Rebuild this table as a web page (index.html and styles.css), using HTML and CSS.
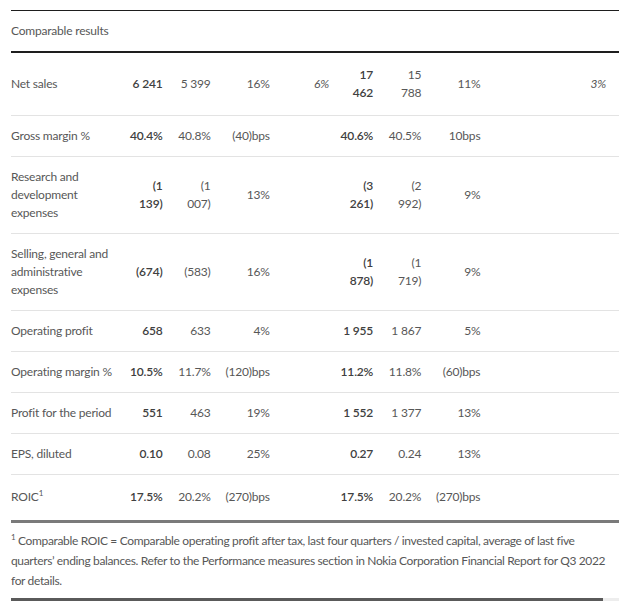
FILE: index.html
```html
<!DOCTYPE html>
<html lang="en">
<head>
<meta charset="utf-8">
<title>Comparable results</title>
<link rel="stylesheet" href="styles.css">
</head>
<body>
<div class="page">
  <table class="results">
    <colgroup>
      <col class="c-label"><col class="c-num"><col class="c-num2"><col class="c-chg"><col class="c-chg">
      <col class="c-num"><col class="c-num2"><col class="c-chg"><col class="c-last">
    </colgroup>
    <thead>
      <tr><th colspan="9" class="title">Comparable results</th></tr>
    </thead>
    <tbody>
      <tr class="tall">
        <th class="label">Net sales</th>
        <td class="cur">6 241</td><td>5 399</td><td>16%</td><td class="alt">6%</td>
        <td class="cur">17<br>462</td><td>15<br>788</td><td>11%</td><td class="alt last">3%</td>
      </tr>
      <tr>
        <th class="label">Gross margin %</th>
        <td class="cur">40.4%</td><td>40.8%</td><td>(40)bps</td><td></td>
        <td class="cur">40.6%</td><td>40.5%</td><td>10bps</td><td class="last"></td>
      </tr>
      <tr>
        <th class="label">Research and development expenses</th>
        <td class="cur">(1<br>139)</td><td>(1<br>007)</td><td>13%</td><td></td>
        <td class="cur">(3<br>261)</td><td>(2<br>992)</td><td>9%</td><td class="last"></td>
      </tr>
      <tr>
        <th class="label">Selling, general and administrative expenses</th>
        <td class="cur">(674)</td><td>(583)</td><td>16%</td><td></td>
        <td class="cur">(1<br>878)</td><td>(1<br>719)</td><td>9%</td><td class="last"></td>
      </tr>
      <tr>
        <th class="label">Operating profit</th>
        <td class="cur">658</td><td>633</td><td>4%</td><td></td>
        <td class="cur">1 955</td><td>1 867</td><td>5%</td><td class="last"></td>
      </tr>
      <tr>
        <th class="label">Operating margin %</th>
        <td class="cur">10.5%</td><td>11.7%</td><td>(120)bps</td><td></td>
        <td class="cur">11.2%</td><td>11.8%</td><td>(60)bps</td><td class="last"></td>
      </tr>
      <tr>
        <th class="label">Profit for the period</th>
        <td class="cur">551</td><td>463</td><td>19%</td><td></td>
        <td class="cur">1 552</td><td>1 377</td><td>13%</td><td class="last"></td>
      </tr>
      <tr>
        <th class="label">EPS, diluted</th>
        <td class="cur">0.10</td><td>0.08</td><td>25%</td><td></td>
        <td class="cur">0.27</td><td>0.24</td><td>13%</td><td class="last"></td>
      </tr>
      <tr class="final">
        <th class="label">ROIC<sup>1</sup></th>
        <td class="cur">17.5%</td><td>20.2%</td><td>(270)bps</td><td></td>
        <td class="cur">17.5%</td><td>20.2%</td><td>(270)bps</td><td class="last"></td>
      </tr>
    </tbody>
  </table>
  <p class="note"><sup>1</sup> Comparable ROIC = Comparable operating profit after tax, last four quarters / invested capital, average of last five<br>quarters’ ending balances. Refer to the Performance measures section in Nokia Corporation Financial Report for Q3 2022<br>for details.</p>
  <div class="scrollbar"><div class="thumb"></div></div>
</div>
</body>
</html>
```

FILE: styles.css
```css
html, body {
  margin: 0;
  padding: 0;
  background: #ffffff;
}

body {
  font-family: "Lato", "Open Sans", "Liberation Sans", sans-serif;
  font-weight: 400;
  font-size: 12px;
  letter-spacing: -0.2px;
  color: #575757;
}

.page {
  padding: 10px 21px 0 11px;
}

.results {
  width: 608px;
  table-layout: fixed;
  border-collapse: collapse;
  line-height: 18px;
}

.c-label { width: 107px; }
.c-num { width: 44px; }
.c-num2 { width: 48px; }
.c-chg { width: 59px; }
.c-last { width: 138px; }

.results thead th {
  border-top: 1px solid #1e1e1e;
  border-bottom: 2px solid #1e1e1e;
  text-align: left;
  font-weight: 400;
  padding: 11px 0;
}

.results td,
.results tbody th {
  padding: 11px 0;
  border-bottom: 1px solid #e3e3e3;
  vertical-align: middle;
}

.results tbody th {
  text-align: left;
  font-weight: 400;
}

.results tr.tall td,
.results tr.tall th {
  padding: 13px 0;
}

.results td {
  text-align: right;
  white-space: nowrap;
}

.results td.cur {
  font-weight: 600;
  color: #404040;
}

.results td.alt {
  font-style: italic;
}

.results td.last {
  padding-right: 13px;
}

.results tr.final td,
.results tr.final th {
  border-bottom: 3px solid #7a7a7a;
  padding: 13px 0 14px;
}

.results tr.tall td.last,
.results tr.final td.last {
  padding-right: 13px;
}

sup {
  font-size: 8px;
  line-height: 0;
  vertical-align: 5px;
}

.note {
  margin: 8px 0 0;
  line-height: 20px;
  letter-spacing: -0.35px;
  white-space: nowrap;
}

.scrollbar {
  margin-top: 7px;
  height: 3px;
  background: #ededed;
  display: flex;
}

.thumb {
  width: 592px;
  background: #5a5a5a;
}
```
